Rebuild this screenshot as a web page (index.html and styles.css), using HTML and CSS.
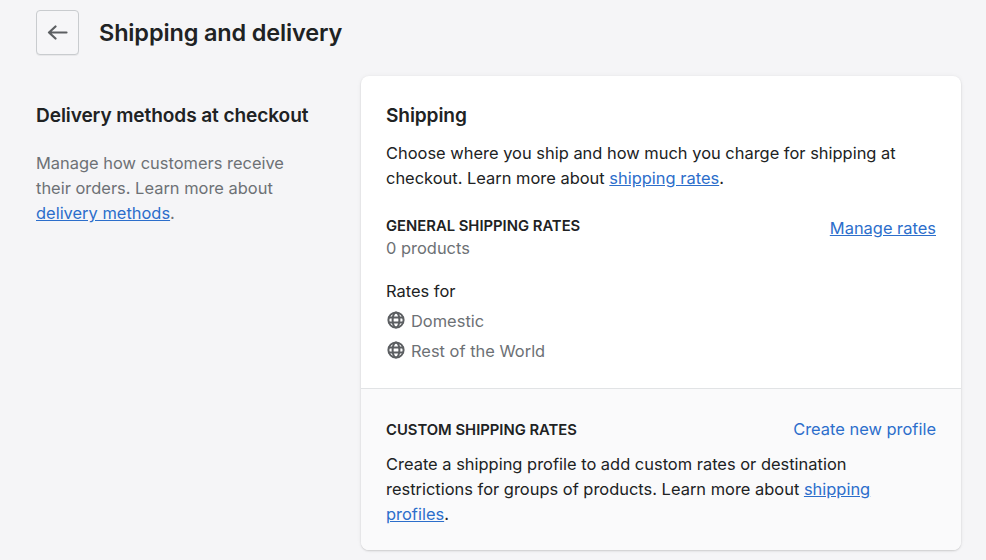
FILE: index.html
```html
<!DOCTYPE html>
<html lang="en">
<head>
    <meta charset="UTF-8">
    <title>Shipping and delivery</title>
    <link rel="stylesheet" href="styles.css">
</head>
<body>
    <div class="page">
        <!-- Header -->
        <div class="page-header">
            <button class="back-btn">
                <svg width="21" height="15" viewBox="0 0 21 15" fill="none" stroke="#5c5f62" stroke-width="2.2" stroke-linecap="round" stroke-linejoin="round">
                    <path d="M19.5 7.5H2M8.5 1.5l-6.5 6 6.5 6"/>
                </svg>
            </button>
            <h1>Shipping and delivery</h1>
        </div>

        <div class="layout">
            <!-- Left column -->
            <div class="intro">
                <h2>Delivery methods at checkout</h2>
                <p>Manage how customers receive their orders. Learn more about <a href="#">delivery methods</a>.</p>
            </div>

            <!-- Card -->
            <div class="card">
                <div class="card-main">
                    <h2>Shipping</h2>
                    <p class="card-text">Choose where you ship and how much you charge for shipping at checkout. Learn more about <a href="#">shipping rates</a>.</p>

                    <div class="rates-head">
                        <div>
                            <h3>General shipping rates</h3>
                            <div class="muted">0 products</div>
                        </div>
                        <a href="#" class="manage-link">Manage rates</a>
                    </div>

                    <div class="rates-for">Rates for</div>
                    <div class="zone">
                        <svg class="globe" width="18" height="18" viewBox="0 0 18 18" fill="none" stroke="#5c5f62" stroke-width="2">
                            <circle cx="9" cy="9" r="7.6"/>
                            <ellipse cx="9" cy="9" rx="3.4" ry="7.6"/>
                            <path d="M1.4 6.6h15.2M1.4 11.4h15.2"/>
                        </svg>
                        <span>Domestic</span>
                    </div>
                    <div class="zone">
                        <svg class="globe" width="18" height="18" viewBox="0 0 18 18" fill="none" stroke="#5c5f62" stroke-width="2">
                            <circle cx="9" cy="9" r="7.6"/>
                            <ellipse cx="9" cy="9" rx="3.4" ry="7.6"/>
                            <path d="M1.4 6.6h15.2M1.4 11.4h15.2"/>
                        </svg>
                        <span>Rest of the World</span>
                    </div>
                </div>

                <div class="card-footer">
                    <div class="custom-head">
                        <h3>Custom shipping rates</h3>
                        <a href="#" class="plain-link">Create new profile</a>
                    </div>
                    <p class="card-text">Create a shipping profile to add custom rates or destination restrictions for groups of products. Learn more about <a href="#">shipping profiles</a>.</p>
                </div>
            </div>
        </div>
    </div>
</body>
</html>
```

FILE: styles.css
```css
body {
    margin: 0;
    background: #f5f5f7;
    color: #202223;
    font-family: Inter, "Liberation Sans", sans-serif;
    font-size: 16.45px;
    line-height: 25px;
    height: 560px;
    overflow: hidden;
}

.page {
    padding: 10px 25px 0 36px;
}

.page-header {
    display: flex;
    align-items: center;
    gap: 20px;
    margin-bottom: 21px;
}

.back-btn {
    width: 43px;
    height: 45px;
    padding: 0;
    display: flex;
    align-items: center;
    justify-content: center;
    background: #f6f6f8;
    border: 1px solid #c9cccf;
    border-radius: 4px;
    box-shadow: 0 1px 0 rgba(0,0,0,0.05);
}

h1 {
    margin: 0;
    font-size: 23.5px;
    line-height: 32px;
    font-weight: 600;
    letter-spacing: -0.15px;
}

h2 {
    margin: 0;
    font-size: 19.1px;
    line-height: 28px;
    font-weight: 600;
    letter-spacing: -0.1px;
}

h3 {
    margin: 0;
    font-size: 14.8px;
    line-height: 20px;
    font-weight: 600;
    text-transform: uppercase;
}

p {
    margin: 0;
}

a {
    color: #2c6ecb;
}

.layout {
    display: flex;
    gap: 52px;
    align-items: flex-start;
}

.intro {
    width: 273px;
    flex-shrink: 0;
    padding-top: 25px;
}

.intro h2 {
    white-space: nowrap;
}

.intro p {
    margin-top: 22px;
    color: #6d7175;
}

.card {
    flex: 1;
    background: #fff;
    border-radius: 8px;
    box-shadow: 0 0 5px rgba(23,24,24,0.05), 0 1px 2px rgba(0,0,0,0.15);
    overflow: hidden;
}

.card-main {
    padding: 25px 25px 24px;
}

.card-text {
    margin-top: 12px;
}

.rates-head {
    display: flex;
    justify-content: space-between;
    align-items: flex-start;
    margin-top: 25px;
}

.muted {
    color: #6d7175;
    line-height: 24px;
}

.rates-for {
    margin-top: 19px;
}

.zone {
    display: flex;
    align-items: center;
    gap: 6px;
    margin-top: 5px;
    color: #6d7175;
}

.globe {
    flex-shrink: 0;
    margin: 0 0 4px 1px;
}

.card-footer {
    padding: 28px 25px 23px;
    background: #fafafb;
    border-top: 1px solid #e1e3e5;
}

.custom-head {
    display: flex;
    justify-content: space-between;
    align-items: center;
}

.custom-head + .card-text {
    margin-top: 10px;
}

.plain-link {
    text-decoration: none;
}
```
